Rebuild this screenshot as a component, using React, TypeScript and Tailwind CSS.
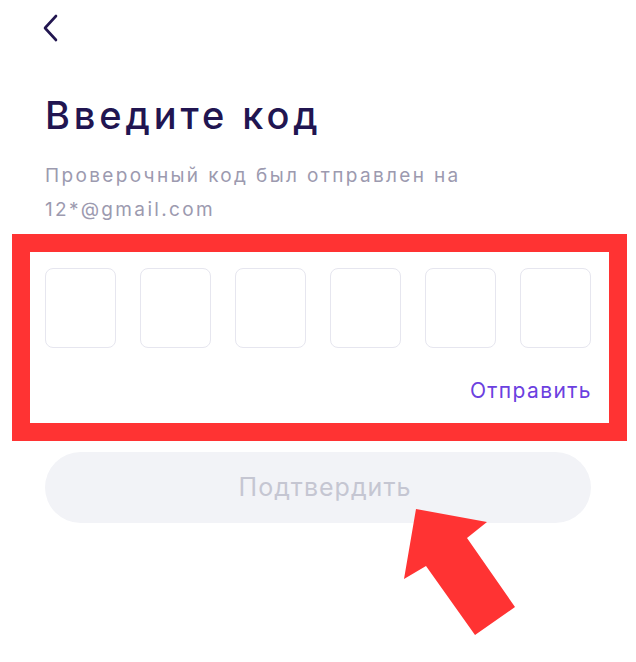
const cells = [0, 1, 2, 3, 4, 5]

export default function App() {
  return (
    <div className="relative h-[662px] w-full overflow-hidden bg-white px-[45px] font-['Inter',sans-serif]">
      <div className="-ml-[2px] pt-[14px]">
        <svg width="16" height="28" viewBox="0 0 16 28" fill="none">
          <path d="M13 2 L2 14 L13 26" stroke="#221650" strokeWidth="2.6" strokeLinecap="round" strokeLinejoin="round" />
        </svg>
      </div>

      <h1 className="mt-[50px] text-[38px] leading-[46px] font-medium tracking-[3.9px] text-[#211551]">Введите код</h1>
      <p className="mt-[21px] text-[19px] leading-[34px] tracking-[2.35px] text-[#9c9aaf]">
        Проверочный код был отправлен на
        <br />
        12*@gmail.com
      </p>

      <div className="mt-[7px] -mr-[36px] -ml-[33px] border-[18px] border-[#ff3333] pt-[16px] pr-[18px] pb-[20px] pl-[15px]">
        <div className="flex justify-between">
          {cells.map((i) => (
            <div key={i} className="h-[80px] w-[71px] rounded-[8px] border-[1.5px] border-[#e6e6ef]" />
          ))}
        </div>
        <div className="mt-[31px] flex justify-end">
          <button className="-mr-[1px] text-[21px] leading-[24px] tracking-[1.4px] text-[#6b40e0]">Отправить</button>
        </div>
      </div>

      <button className="mt-[11px] flex h-[71px] w-full items-center justify-center rounded-full bg-[#f2f3f7] pl-[14px] text-[25px] tracking-[1px] text-[#c5c6d2]">
        Подтвердить
      </button>

      <svg className="absolute top-[500px] left-[400px]" width="120" height="140" viewBox="0 0 120 140">
        <polygon points="16,9 87,22 67,38 115,107 75,135 26,66 4,79" fill="#ff3333" />
      </svg>
    </div>
  )
}
